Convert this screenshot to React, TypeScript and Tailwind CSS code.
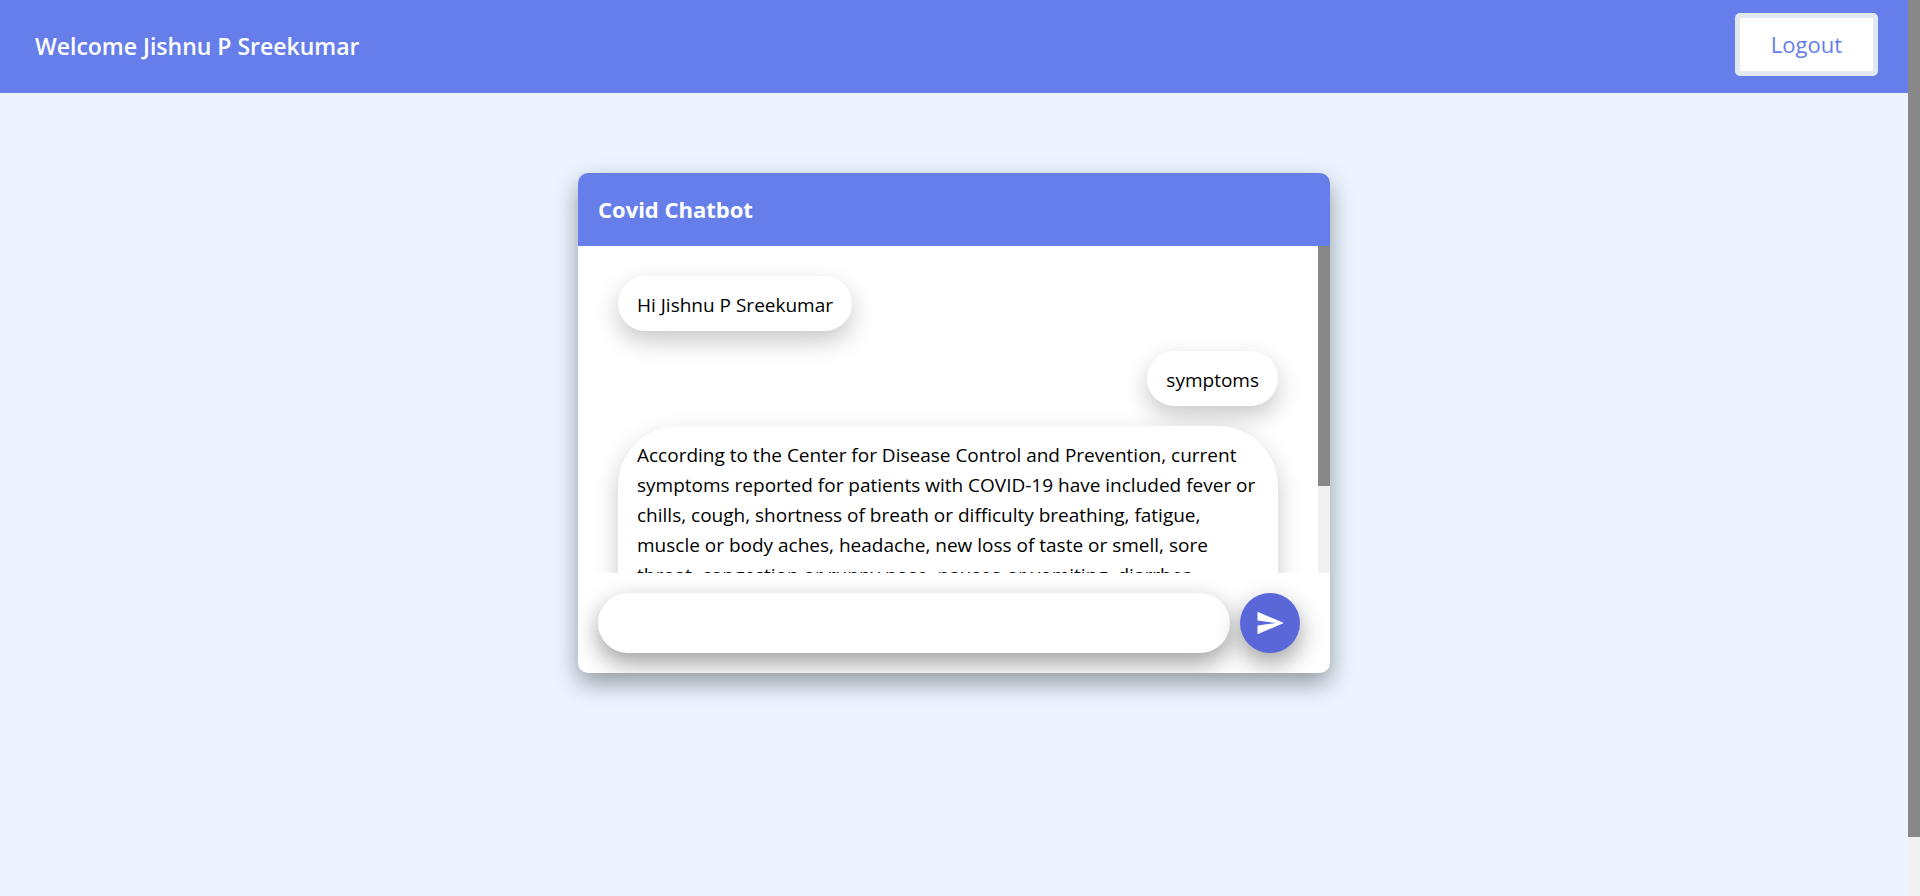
import { useState } from "react";

const messages = [
  { from: "bot", text: "Hi Jishnu P Sreekumar" },
  { from: "user", text: "symptoms" },
  {
    from: "bot",
    long: true,
    text: "According to the Center for Disease Control and Prevention, current symptoms reported for patients with COVID-19 have included fever or chills, cough, shortness of breath or difficulty breathing, fatigue, muscle or body aches, headache, new loss of taste or smell, sore throat, congestion or runny nose, nausea or vomiting, diarrhea.",
  },
];

function Header() {
  return (
    <header className="flex items-center justify-between bg-[#667eea] pt-[13px] pr-[30px] pb-[17px] pl-[35px]">
      <h1 className="pt-1 text-[23px] font-semibold text-white">Welcome Jishnu P Sreekumar</h1>
      <button
        type="button"
        className="h-[63px] rounded-[5px] border-5 border-[#e2e8f0] bg-white px-[31px] text-[22px] font-medium text-[#667eea]"
      >
        Logout
      </button>
    </header>
  );
}

function Message({ from, text, long }: { from: string; text: string; long?: boolean }) {
  const side = from === "user" ? "self-end" : "self-start";
  const height = long ? "min-h-[235px]" : "";
  return (
    <li
      className={`max-w-full shrink-0 rounded-[60px] bg-white px-[19px] pt-[14px] pb-[11px] shadow-[0_10px_25px_rgba(0,0,0,0.22)] ${side} ${height}`}
    >
      {text}
    </li>
  );
}

function ChatCard() {
  const [draft, setDraft] = useState("");
  return (
    <section className="flex h-[500px] w-[752px] max-w-full flex-col overflow-hidden rounded-[10px] bg-white shadow-[0_10px_25px_rgba(0,0,0,0.38)]">
      <h2 className="bg-[#667eea] px-5 py-[21px] text-[22px] leading-[31px] font-bold text-white">Covid Chatbot</h2>
      <div className="flex min-h-0 flex-1">
        <ul className="flex min-w-0 flex-1 flex-col gap-5 overflow-y-auto px-10 py-[30px] text-[19px] leading-[30px] text-black [scrollbar-width:none]">
          {messages.map((m) => (
            <Message key={m.text} from={m.from} text={m.text} long={m.long} />
          ))}
        </ul>
        <div className="w-3 bg-[#f0f0f0]">
          <div className="h-[240px] bg-[#888888]" />
        </div>
      </div>
      <form className="flex gap-[10px] py-5 pr-[30px] pl-5" onSubmit={(e) => e.preventDefault()}>
        <input
          type="text"
          aria-label="Message"
          value={draft}
          onChange={(e) => setDraft(e.target.value)}
          className="h-[60px] min-w-0 flex-1 rounded-full bg-white px-5 text-[19px] shadow-[0_10px_25px_rgba(0,0,0,0.38)] outline-none"
        />
        <button
          type="submit"
          aria-label="Send"
          className="flex size-[60px] items-center justify-center rounded-full bg-[#5a67d8] text-white shadow-[0_10px_25px_rgba(0,0,0,0.38)]"
        >
          <svg viewBox="0 0 24 24" className="size-[30px]" fill="currentColor" aria-hidden="true">
            <path d="M2.01 21 23 12 2.01 3 2 10l15 2-15 2z" />
          </svg>
        </button>
      </form>
    </section>
  );
}

export default function App() {
  return (
    <div className="flex h-screen overflow-hidden bg-[#ebf4ff] font-['Open_Sans',sans-serif]">
      <div className="flex min-w-0 flex-1 flex-col">
        <Header />
        <main className="flex justify-center px-5 pt-20">
          <ChatCard />
        </main>
      </div>
      <div className="w-3 bg-[#f0f0f0]">
        <div className="h-[93.4%] bg-[#888888]" />
      </div>
    </div>
  );
}
